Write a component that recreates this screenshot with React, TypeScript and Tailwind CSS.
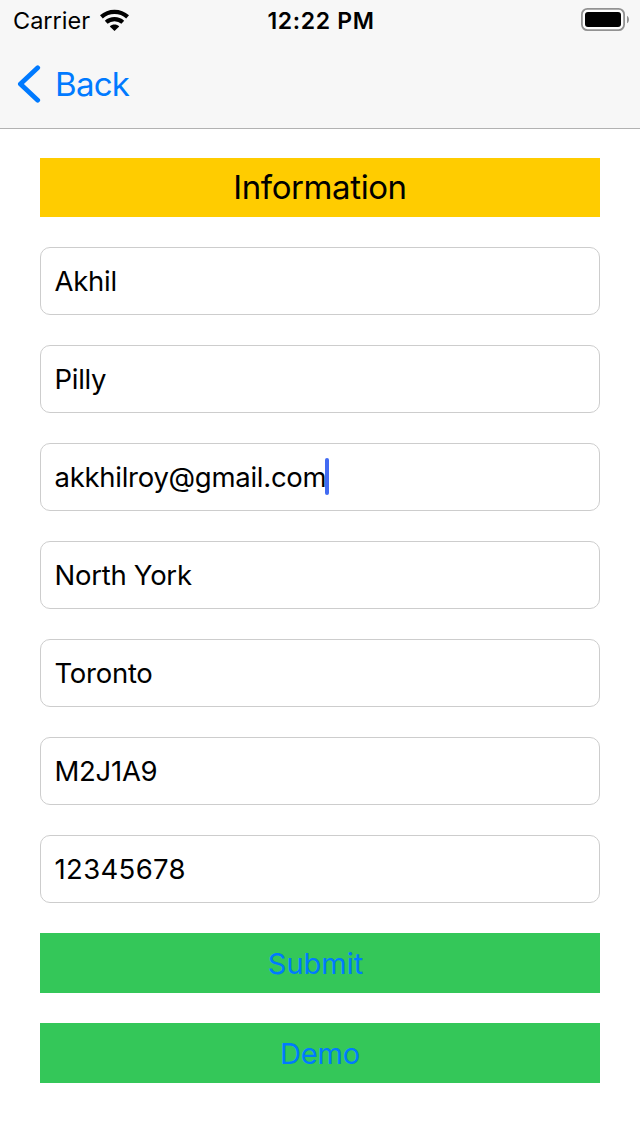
type Field = { value: string; tracking?: string; active?: boolean };

const fields: Field[] = [
  { value: 'Akhil' },
  { value: 'Pilly' },
  { value: 'akkhilroy@gmail.com', active: true },
  { value: 'North York' },
  { value: 'Toronto' },
  { value: 'M2J1A9' },
  { value: '12345678', tracking: 'tracking-[0.35px]' },
];

function WifiIcon() {
  return (
    <svg width="29" height="22" viewBox="0 0 29 22" fill="none" stroke="#000" strokeWidth="4.2">
      <path d="M1.4 7.9C8.8 1.2 20.2 1.2 27.6 7.9" />
      <path d="M6.2 13.3c4.7-4.2 11.9-4.2 16.6 0" />
      <path d="M14.5 22 9.8 17.5c2.6-2.6 6.8-2.6 9.4 0Z" fill="#000" stroke="none" />
    </svg>
  );
}

function BatteryIcon() {
  return (
    <svg width="48" height="23" viewBox="0 0 48 23">
      <rect x="0.9" y="0.9" width="42.2" height="21.2" rx="5.5" fill="#fff" fillOpacity="0.7" stroke="#929292" strokeWidth="1.8" />
      <rect x="4" y="4" width="36" height="15" rx="3" fill="#000" />
      <path d="M46 7.7c2.6 1.3 2.6 6.3 0 7.6Z" fill="#929292" />
    </svg>
  );
}

export default function App() {
  return (
    <div className="flex h-[1136px] w-[640px] flex-col bg-white font-['Inter',sans-serif] text-black">
      <header className="h-[129px] border-b border-[#b2b2b2] bg-[#f7f7f7]">
        <div className="grid h-10 grid-cols-3 items-center pr-[11px] pl-[13px]">
          <div className="flex items-center gap-[9px]">
            <span className="w-[78px] pt-0.5 text-[23.5px] leading-[38px]">Carrier</span>
            <WifiIcon />
          </div>
          <span className="pt-0.5 text-center text-[23px] leading-[38px] font-semibold tracking-[0.65px]">12:22 PM</span>
          <div className="mb-px justify-self-end">
            <BatteryIcon />
          </div>
        </div>
        <button className="flex h-[88px] items-center gap-[14px] pl-[17px] text-[#007aff]">
          <svg width="24" height="38" viewBox="0 0 24 38" fill="none" stroke="currentColor" strokeWidth="4.8" strokeLinecap="round" strokeLinejoin="round">
            <path d="M20.7 2.8 3.4 19l17.3 16.2" />
          </svg>
          <span className="pt-0.5 text-[33px] tracking-[-0.7px]">Back</span>
        </button>
      </header>
      <main className="flex flex-col gap-[30px] px-10 pt-[29px]">
        <h1 className="h-[59px] bg-[#ffcc00] text-center text-[33px] leading-[59px] tracking-[-0.4px]">Information</h1>
        {fields.map((f) => (
          <div key={f.value} className="flex h-[68px] items-center rounded-[10px] border border-[#cdcdcd] pl-[13.5px] text-[27.5px]">
            <span className={`pb-px leading-10 ${f.tracking ?? 'tracking-[-0.27px]'}`}>{f.value}</span>
            {f.active && <span className="-ml-px mb-px h-[37px] w-1 rounded-[2px] bg-[#426bf2]" />}
          </div>
        ))}
        <button className="h-[60px] bg-[#34c759] pt-px pr-[9px] text-[29px] text-[#007aff]">Submit</button>
        <button className="h-[60px] bg-[#34c759] pt-px text-[29px] tracking-[-0.2px] text-[#007aff]">Demo</button>
      </main>
    </div>
  );
}
